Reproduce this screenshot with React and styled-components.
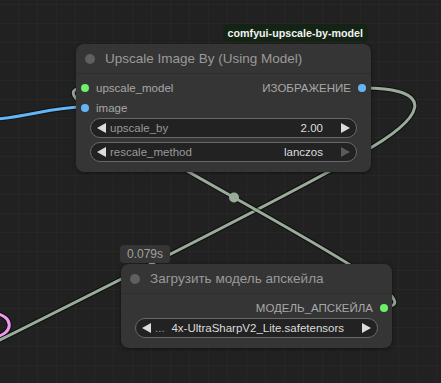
import React from 'react';
import styled, { createGlobalStyle } from 'styled-components';

const GlobalStyle = createGlobalStyle`
  body {
    margin: 0;
    background: #212121;
    font-family: "Liberation Sans", Arial, sans-serif;
  }
`;

const Canvas = styled.div`
  position: relative;
  width: 441px;
  height: 383px;
  overflow: hidden;
  background-color: #212121;
  background-image:
    linear-gradient(to right, rgba(255, 255, 255, 0.025) 1px, transparent 1px),
    linear-gradient(to bottom, rgba(255, 255, 255, 0.025) 1px, transparent 1px);
  background-size: 19px 19px;
  background-position: -1px 4px;
`;

const Links = styled.svg`
  position: absolute;
  left: 0;
  top: 0;
`;

const Node = styled.div`
  position: absolute;
  left: ${(p) => p.$x}px;
  top: ${(p) => p.$y}px;
  width: ${(p) => p.$w}px;
  background: #353535;
  border-radius: 8px;
  box-shadow: 0 1px 4px rgba(0, 0, 0, 0.45);
  display: flex;
  flex-direction: column;
  padding-bottom: 10px;
`;

const Title = styled.div`
  height: 29px;
  display: flex;
  align-items: center;
  gap: 10px;
  padding-left: 9px;
  border-bottom: 1px solid #2e2e2e;
  color: #9a9a9a;
  font-size: 13.5px;
`;

const TitleDot = styled.span`
  width: 10px;
  height: 10px;
  border-radius: 50%;
  background: #5f5f5f;
`;

const Body = styled.div`
  padding-top: 4px;
  display: flex;
  flex-direction: column;
`;

const Widgets = styled.div`
  display: flex;
  flex-direction: column;
  gap: 4px;
`;

const SlotRow = styled.div`
  height: 20px;
  display: flex;
  align-items: center;
  justify-content: ${(p) => p.$justify || 'flex-start'};
  font-size: 11.5px;
  color: #a8a8a8;
`;

const Slot = styled.div`
  display: flex;
  align-items: center;
  gap: 7px;
  flex-direction: ${(p) => (p.$out ? 'row-reverse' : 'row')};
  margin-left: ${(p) => (p.$out ? '0' : '5px')};
  margin-right: ${(p) => (p.$out ? p.$right || '5px' : '0')};
`;

const Dot = styled.span`
  width: 8px;
  height: 8px;
  border-radius: 50%;
  background: ${(p) => p.$color};
`;

const Widget = styled.div`
  height: 18px;
  margin: 0 14px;
  border: 1px solid #686868;
  border-radius: 10px;
  background: #222222;
  display: flex;
  align-items: center;
  padding: 0 6px;
  font-size: 11.5px;
  color: #999;
`;

const Label = styled.span`
  flex: 1;
  margin-left: 4px;
  white-space: nowrap;
`;

const Value = styled.span`
  color: #dcdcdc;
  margin-right: 18px;
  white-space: nowrap;
`;

const Badge = styled.div`
  position: absolute;
  top: -20px;
  right: 3px;
  height: 18px;
  padding: 0 5px;
  border-radius: 5px;
  background: #142414;
  color: #f2f2f2;
  font-size: 10.7px;
  font-weight: bold;
  display: flex;
  align-items: center;
`;

const Timing = styled.div`
  position: absolute;
  top: -19px;
  left: -1px;
  width: 50px;
  height: 18px;
  border-radius: 4px;
  background: #353535;
  color: #a0a0a0;
  font-size: 12px;
  display: flex;
  align-items: center;
  justify-content: center;
`;

function Arrow({ dir, dim }) {
  const pts = dir === 'left' ? '9,0 9,10 0,5' : '0,0 0,10 9,5';
  return (
    <svg width="9" height="10" viewBox="0 0 9 10">
      <polygon points={pts} fill={dim ? '#5a5a5a' : '#dcdcdc'} />
    </svg>
  );
}

function Combo({ label, value, dimRight }) {
  return (
    <Widget>
      <Arrow dir="left" />
      <Label>{label}</Label>
      <Value>{value}</Value>
      <Arrow dir="right" dim={dimRight} />
    </Widget>
  );
}

function LinkPath({ d, color }) {
  return (
    <g fill="none" strokeLinecap="round">
      <path d={d} stroke="#000" strokeOpacity="0.55" strokeWidth="5" />
      <path d={d} stroke={color} strokeWidth="3" />
    </g>
  );
}

export default function App() {
  const link = '#9aab9a';
  return (
    <>
      <GlobalStyle />
      <Canvas>
        <Links width="441" height="383" viewBox="0 0 441 383">
          <LinkPath d="M-6,313 C14,316 14,333 -4,337" color="#f29af2" />
          <LinkPath d="M-20,121 C30,117 50,107 85,107" color="#64b5f6" />
          <LinkPath d="M362,88 C440,88 425,118 360,154 C300,190 100,290 0,340 L-30,355" color={link} />
          <LinkPath d="M383,307 C475,307 -7,88 85,88" color={link} />
          <circle cx="234" cy="197.5" r="5" fill={link} />
        </Links>

        <Node $x={76} $y={44} $w={295}>
          <Badge>comfyui-upscale-by-model</Badge>
          <Title>
            <TitleDot />
            Upscale Image By (Using Model)
          </Title>
          <Body>
            <SlotRow $justify="space-between">
              <Slot>
                <Dot $color="#6cf06c" />
                upscale_model
              </Slot>
              <Slot $out>
                <Dot $color="#64b5f6" />
                ИЗОБРАЖЕНИЕ
              </Slot>
            </SlotRow>
            <SlotRow>
              <Slot>
                <Dot $color="#64b5f6" />
                image
              </Slot>
            </SlotRow>
            <Widgets>
              <Combo label="upscale_by" value="2.00" />
              <Combo label="rescale_method" value="lanczos" dimRight />
            </Widgets>
          </Body>
        </Node>

        <Node $x={121} $y={264} $w={271}>
          <Timing>0.079s</Timing>
          <Title>
            <TitleDot />
            Загрузить модель апскейла
          </Title>
          <Body>
            <SlotRow $justify="flex-end">
              <Slot $out $right="4px">
                <Dot $color="#6cf06c" />
                МОДЕЛЬ_АПСКЕЙЛА
              </Slot>
            </SlotRow>
            <Widgets>
              <Combo label="..." value="4x-UltraSharpV2_Lite.safetensors" />
            </Widgets>
          </Body>
        </Node>
      </Canvas>
    </>
  );
}
